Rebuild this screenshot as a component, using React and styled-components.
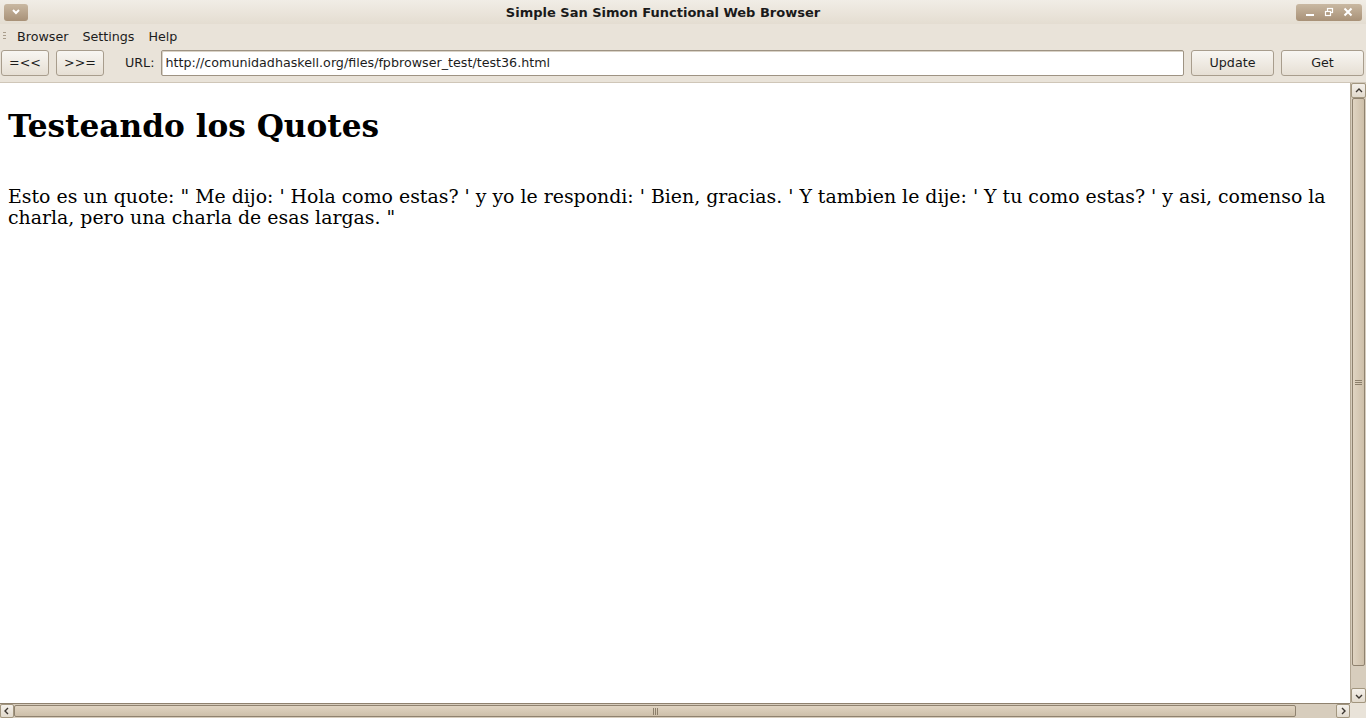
import React from 'react'
import styled, { createGlobalStyle } from 'styled-components';

const GlobalStyle = createGlobalStyle`
  html, body {
    margin: 0;
    padding: 0;
    width: 1366px;
    height: 718px;
    overflow: hidden;
    background: #e9e3d9;
  }
  * { box-sizing: border-box; }
`

const Window = styled.div`
  width: 1366px;
  height: 718px;
  display: flex;
  flex-direction: column;
  font-family: "DejaVu Sans", "Liberation Sans", sans-serif;
  background: #e9e3d9;
`

const TitleBar = styled.div`
  height: 24px;
  display: grid;
  grid-template-columns: 40px 1fr 80px;
  align-items: center;
  background: linear-gradient(#f1ede6, #e4ddd1);
  padding: 0 4px;
`

const TitleText = styled.div`
  text-align: center;
  font-weight: bold;
  font-size: 13px;
  color: #1a1a1a;
`

const TitleButton = styled.div`
  height: 17px;
  width: ${p => p.w}px;
  justify-self: ${p => p.align};
  border-radius: 3px;
  background: linear-gradient(#c9b8a2, #a89177);
  display: flex;
  align-items: center;
  justify-content: space-around;
  padding: 0 4px;
`

const MenuBar = styled.div`
  height: 23px;
  display: flex;
  align-items: center;
  padding-top: 2px;
  font-size: 12.7px;
  color: #1c1c1c;
`

const Grip = styled.div`
  width: 3px;
  height: 9px;
  margin: 0 11px 0 3px;
  background: repeating-linear-gradient(#a99d8c 0 1px, transparent 1px 3px);
`

const MenuItem = styled.span`
  margin-right: 14px;
`

const ToolBar = styled.div`
  height: 35px;
  display: flex;
  align-items: center;
  padding: 0 2px 4px 1px;
  font-size: 12.7px;
  color: #1c1c1c;
`

const Button = styled.div`
  width: ${p => p.w}px;
  height: 26px;
  margin-left: ${p => p.gap || 0}px;
  border: 1px solid #a89d8d;
  border-radius: 3px;
  background: linear-gradient(#f8f6f2, #e6dfd4);
  display: flex;
  align-items: center;
  justify-content: center;
`

const Label = styled.span`
  margin: 0 7px 0 21px;
`

const UrlInput = styled.div`
  flex: 1;
  height: 26px;
  border: 1px solid #9e9383;
  border-radius: 2px;
  background: #fff;
  display: flex;
  align-items: center;
  padding-left: 3px;
  box-shadow: inset 1px 1px 0 #d9d2c6;
`

const Body = styled.div`
  flex: 1;
  display: grid;
  grid-template-columns: 1fr 16px;
  grid-template-rows: 1fr 15px;
  border-top: 1px solid #cfc6b8;
  min-height: 0;
`

const Page = styled.div`
  background: #fff;
  padding: 0 8px;
  font-family: "DejaVu Serif", "Liberation Serif", serif;
  color: #000;
  overflow: hidden;
`

const Heading = styled.h1`
  font-size: 31.2px;
  font-weight: bold;
  margin: 23px 0 40px;
  line-height: 40px;
`

const Para = styled.p`
  font-size: 18.9px;
  line-height: 21px;
  margin: 0;
`

const VScroll = styled.div`
  background: #d7cdbd;
  border-left: 1px solid #b4a895;
  display: flex;
  flex-direction: column;
`

const HScroll = styled.div`
  background: #d7cdbd;
  border-top: 1px solid #8f826f;
  display: flex;
`

const Arrow = styled.div`
  width: ${p => p.horizontal ? 14 : 15}px;
  height: ${p => p.horizontal ? 14 : 15}px;
  background: linear-gradient(#f4f0ea, #e2dacd);
  border: 1px solid #a2967f;
  border-radius: 2px;
  display: flex;
  align-items: center;
  justify-content: center;
  flex-shrink: 0;
`

const VThumb = styled.div`
  flex: 1;
  margin: 0 1px 22px;
  border: 1px solid #8f826f;
  border-radius: 2px;
  background: linear-gradient(90deg, #e0d4c2, #cdbfa9);
  display: flex;
  align-items: center;
  justify-content: center;
`

const HThumb = styled.div`
  width: 1282px;
  margin: 1px 0;
  border: 1px solid #8f826f;
  border-radius: 2px;
  background: linear-gradient(#e0d4c2, #cdbfa9);
  display: flex;
  align-items: center;
  justify-content: center;
`

const Spacer = styled.div`
  flex: 1;
`

const Corner = styled.div`
  background: #e9e3d9;
`

const Chevron = ({ dir }) => {
  const paths = {
    up: 'M2 6 L5 3 L8 6',
    down: 'M2 4 L5 7 L8 4',
    left: 'M6 2 L3 5 L6 8',
    right: 'M4 2 L7 5 L4 8',
  }
  return (
    <svg width="10" height="10" viewBox="0 0 10 10">
      <path d={paths[dir]} fill="none" stroke="#3b3530" strokeWidth="1.4" />
    </svg>
  )
}

const GripLines = ({ vertical }) => (
  <svg width="7" height="7" viewBox="0 0 7 7">
    {vertical
      ? [1, 3, 5].map(y => <line key={y} x1="0" x2="7" y1={y + 0.5} y2={y + 0.5} stroke="#8c7f6b" />)
      : [1, 3, 5].map(x => <line key={x} y1="0" y2="7" x1={x + 0.5} x2={x + 0.5} stroke="#8c7f6b" />)}
  </svg>
)

export default function App() {
  return (
    <>
      <GlobalStyle />
      <Window>
        <TitleBar>
          <TitleButton w={24} align="start">
            <svg width="10" height="8" viewBox="0 0 10 8">
              <path d="M2 2 L5 5 L8 2" fill="none" stroke="#fff" strokeWidth="2" />
            </svg>
          </TitleButton>
          <TitleText>Simple San Simon Functional Web Browser</TitleText>
          <TitleButton w={66} align="end">
            <svg width="10" height="10" viewBox="0 0 10 10">
              <rect x="1" y="7" width="8" height="2" fill="#fff" />
            </svg>
            <svg width="10" height="10" viewBox="0 0 10 10">
              <rect x="3.5" y="1.5" width="5" height="4" fill="none" stroke="#fff" strokeWidth="1.2" />
              <rect x="1.5" y="4.5" width="5" height="4" fill="#b09b81" stroke="#fff" strokeWidth="1.2" />
            </svg>
            <svg width="10" height="10" viewBox="0 0 10 10">
              <path d="M1.5 1.5 L8.5 8.5 M8.5 1.5 L1.5 8.5" stroke="#fff" strokeWidth="2" />
            </svg>
          </TitleButton>
        </TitleBar>
        <MenuBar>
          <Grip />
          <MenuItem>Browser</MenuItem>
          <MenuItem>Settings</MenuItem>
          <MenuItem>Help</MenuItem>
        </MenuBar>
        <ToolBar>
          <Button w={48}>=&lt;&lt;</Button>
          <Button w={48} gap={7}>&gt;&gt;=</Button>
          <Label>URL:</Label>
          <UrlInput>http://comunidadhaskell.org/files/fpbrowser_test/test36.html</UrlInput>
          <Button w={83} gap={7}>Update</Button>
          <Button w={83} gap={7}>Get</Button>
        </ToolBar>
        <Body>
          <Page>
            <Heading>Testeando los Quotes</Heading>
            <Para>
              Esto es un quote: " Me dijo: ' Hola como estas? ' y yo le respondi: ' Bien, gracias. ' Y tambien le dije: ' Y tu como estas? ' y asi, comenso la charla, pero una charla de esas largas. "
            </Para>
          </Page>
          <VScroll>
            <Arrow><Chevron dir="up" /></Arrow>
            <VThumb><GripLines vertical /></VThumb>
            <Arrow><Chevron dir="down" /></Arrow>
          </VScroll>
          <HScroll>
            <Arrow horizontal><Chevron dir="left" /></Arrow>
            <HThumb><GripLines /></HThumb>
            <Spacer />
            <Arrow horizontal><Chevron dir="right" /></Arrow>
          </HScroll>
          <Corner />
        </Body>
      </Window>
    </>
  )
}
